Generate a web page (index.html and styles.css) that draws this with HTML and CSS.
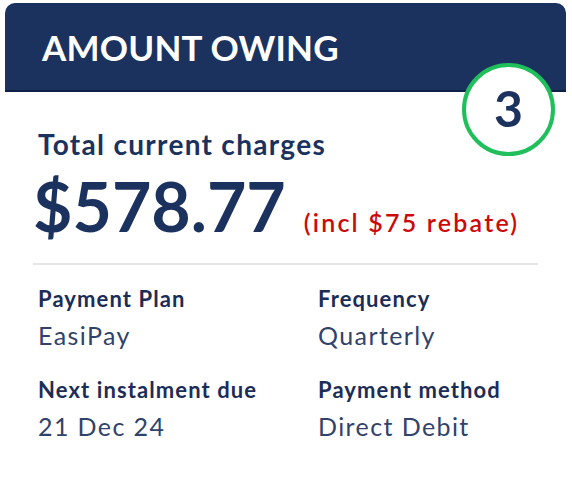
FILE: index.html
```html
<!DOCTYPE html>
<html lang="en">
  <head>
    <meta charset="UTF-8" />
    <title>Amount owing</title>
    <link rel="stylesheet" href="styles.css">
  </head>
  <body>
    <div class="card">
      <div class="card-header">
        <h1>AMOUNT OWING</h1>
        <span class="step">3</span>
      </div>
      <div class="card-body">
        <div class="total-label">Total current charges</div>
        <div class="total">
          <span class="amount">$578.77</span>
          <span class="rebate">(incl $75 rebate)</span>
        </div>
        <div class="details">
          <div class="item">
            <div class="item-label">Payment Plan</div>
            <div class="item-value">EasiPay</div>
          </div>
          <div class="item">
            <div class="item-label">Frequency</div>
            <div class="item-value">Quarterly</div>
          </div>
          <div class="item">
            <div class="item-label">Next instalment due</div>
            <div class="item-value">21 Dec 24</div>
          </div>
          <div class="item">
            <div class="item-label">Payment method</div>
            <div class="item-value">Direct Debit</div>
          </div>
        </div>
      </div>
    </div>
  </body>
</html>
```

FILE: styles.css
```css
* {
  box-sizing: border-box;
  font-family: Lato, "Open Sans", sans-serif;
}

body {
  margin: 0;
  padding: 3px 6px 0 5px;
  background: #ffffff;
}

.card {
  position: relative;
}

.card-header {
  height: 89px;
  background-color: #1b325e;
  border-radius: 10px 10px 0 0;
  border-bottom: 2px solid #0f2048;
  padding: 24px 0 0 37px;
}

.card-header h1 {
  margin: 0;
  color: #ffffff;
  font-size: 35px;
  font-weight: 700;
  line-height: 40px;
  letter-spacing: 0.2px;
}

.step {
  position: absolute;
  top: 60px;
  right: 11px;
  width: 93px;
  height: 93px;
  border: 4px solid #20bf5c;
  border-radius: 50%;
  background: #ffffff;
  color: #1b325e;
  font-size: 50px;
  font-weight: 700;
  line-height: 1;
  display: flex;
  justify-content: center;
  align-items: center;
  padding-bottom: 4px;
}

.card-body {
  padding: 37px 28px 0 28px;
}

.total-label {
  padding-left: 5px;
  color: #1b325e;
  font-size: 28px;
  font-weight: 700;
  line-height: 30px;
  letter-spacing: 1.3px;
}

.total {
  display: flex;
  align-items: baseline;
  gap: 18px;
  padding-bottom: 10px;
  border-bottom: 2px solid #e6e6e6;
}

.amount {
  color: #1b325e;
  font-size: 68px;
  font-weight: 700;
  line-height: 94px;
}

.rebate {
  color: #cc0a0a;
  font-size: 25px;
  font-weight: 600;
  letter-spacing: 2.2px;
}

.details {
  display: grid;
  grid-template-columns: 280px 1fr;
  row-gap: 25px;
  padding: 21px 0 0 5px;
}

.item-label {
  color: #1b2d57;
  font-size: 22px;
  font-weight: 700;
  line-height: 26px;
  letter-spacing: 1.1px;
}

.item-value {
  margin-top: 6px;
  color: #31436a;
  font-size: 25px;
  line-height: 34px;
  letter-spacing: 1.4px;
}
```
